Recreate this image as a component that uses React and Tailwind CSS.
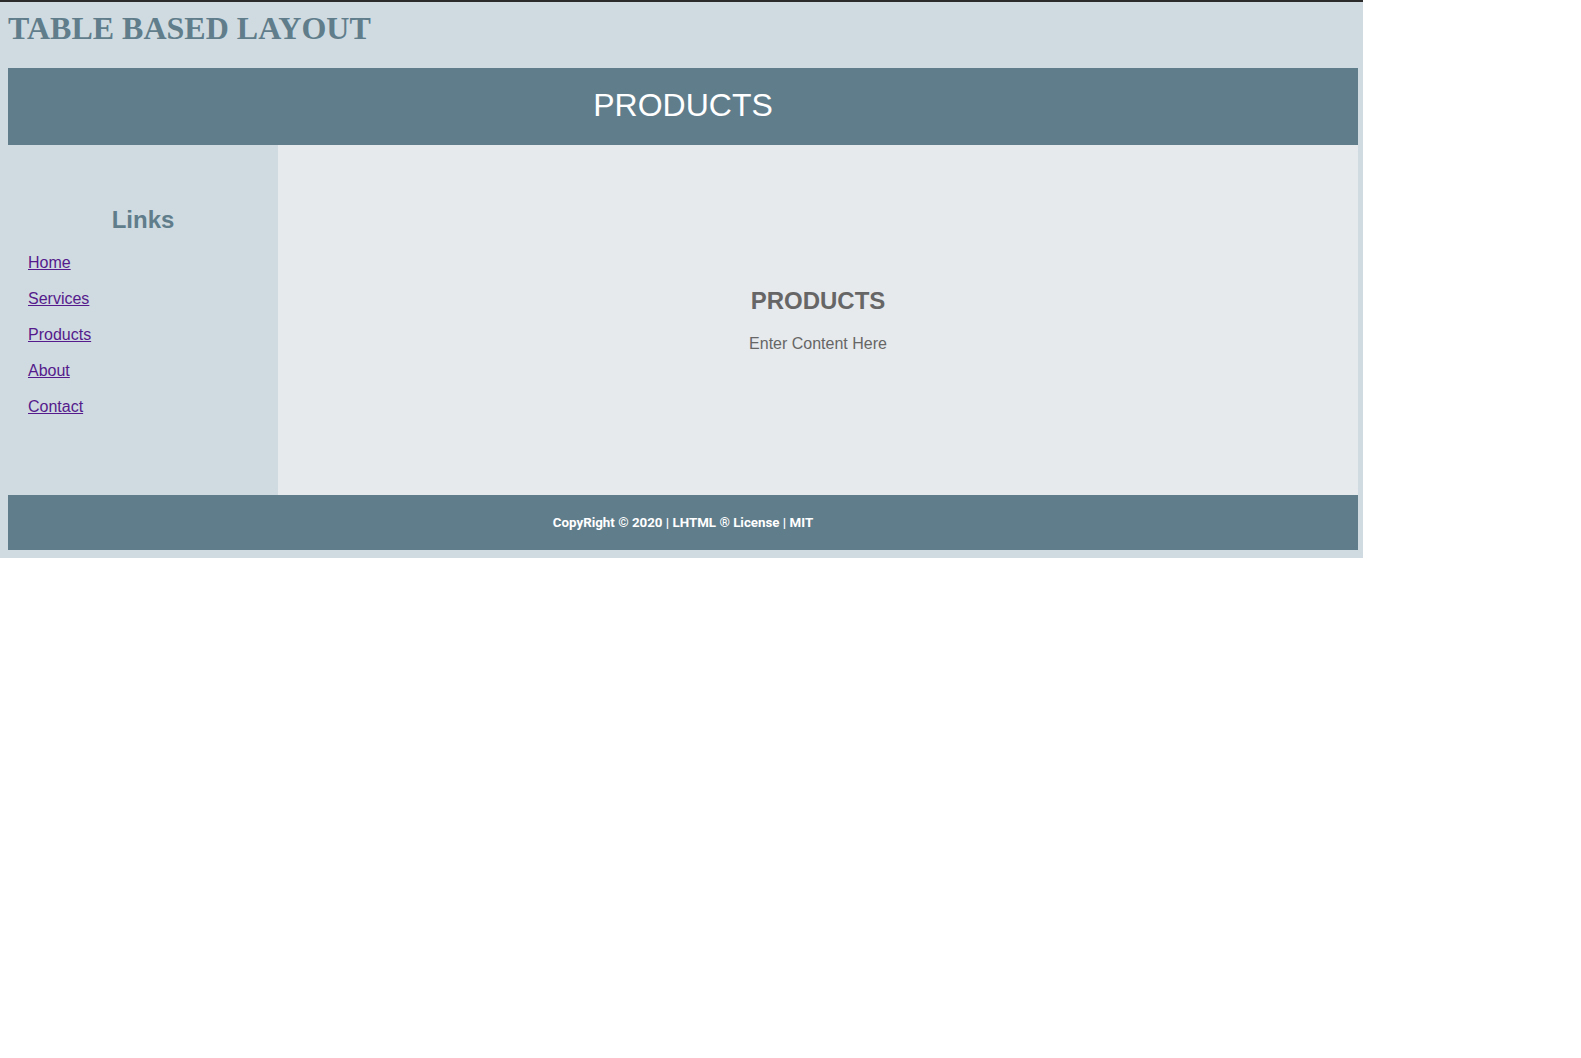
const links = ['Home', 'Services', 'Products', 'About', 'Contact'];

export default function App() {
  return (
    <div className="w-[1363px] border-t-2 border-[#2b2b2b] bg-[#d0dbe1] pb-2 font-['Liberation_Sans',Arial,sans-serif]">
      <header className="px-2 pt-[8px] pb-[22px]">
        <h1 className="font-['Liberation_Serif','Times_New_Roman',serif] text-[32px] font-bold leading-[36px] text-[#607d8b]">
          TABLE BASED LAYOUT
        </h1>
      </header>

      <div className="ml-2 w-[1350px]">
        <div className="flex h-[77px] items-center justify-center bg-[#607d8b] pb-[2px]">
          <h2 className="text-[32px] leading-[37px] text-white">PRODUCTS</h2>
        </div>

        <div className="flex h-[350px]">
          {/* sidebar */}
          <aside className="w-[270px] shrink-0 bg-[#d0dbe1] pt-[61px]">
            <h2 className="mb-[20px] text-center text-[24px] font-bold leading-[28px] text-[#607d8b]">Links</h2>
            <ul className="flex flex-col gap-[18px] pl-5 text-[16px] leading-[18px]">
              {links.map((label) => (
                <li key={label}>
                  <a href="#" className="text-[#551a8b] underline">
                    {label}
                  </a>
                </li>
              ))}
            </ul>
          </aside>

          {/* main content */}
          <main className="flex flex-1 flex-col items-center justify-center bg-[#e6eaed] text-[#666666]">
            <h2 className="mb-[20px] text-[24px] font-bold leading-[28px]">PRODUCTS</h2>
            <p className="text-[16px] leading-[18px]">Enter Content Here</p>
          </main>
        </div>

        <footer className="flex h-[55px] items-center justify-center bg-[#607d8b]">
          <p className="font-['Roboto',Arial,sans-serif] text-[13.33px] font-bold text-white">
            CopyRight © 2020 | LHTML ® License | MIT
          </p>
        </footer>
      </div>
    </div>
  );
}
